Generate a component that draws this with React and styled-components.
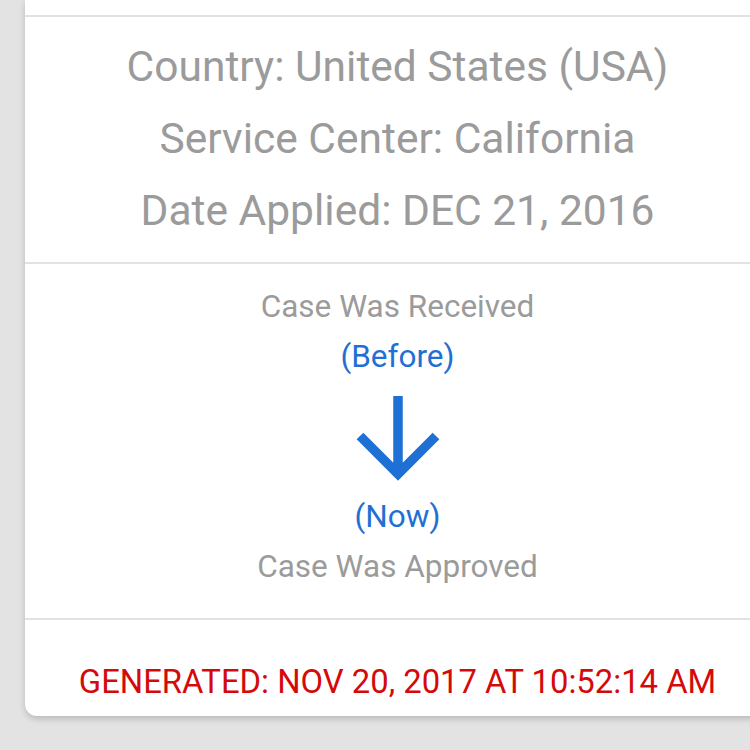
import React from 'react';
import styled, { createGlobalStyle } from 'styled-components';

const GlobalStyle = createGlobalStyle`
  html, body {
    margin: 0;
    padding: 0;
    background: #e3e3e3;
    overflow: hidden;
  }
  body {
    font-family: 'Roboto', 'Liberation Sans', sans-serif;
  }
`;

const Page = styled.div`
  width: 750px;
  height: 750px;
  overflow: hidden;
  padding-left: 25px;
  box-sizing: border-box;
`;

const Card = styled.div`
  width: 745px;
  background: #fff;
  border-bottom-left-radius: 12px;
  box-shadow: 0 3px 6px rgba(0, 0, 0, 0.18);
`;

const Section = styled.div`
  border-top: 2px solid #e2e2e2;
  padding: ${(p) => p.pad || '0'};
  display: flex;
  flex-direction: column;
  align-items: center;
  text-align: center;
`;

const TopStrip = styled.div`
  height: 15px;
`;

const InfoLine = styled.div`
  font-size: 42.5px;
  line-height: 72px;
  color: #9b9b9b;
  white-space: nowrap;
`;

const StatusLine = styled.div`
  font-size: 31.5px;
  line-height: 50px;
  color: ${(p) => (p.blue ? '#1f70d4' : '#9b9b9b')};
  white-space: nowrap;
`;

const ArrowBox = styled.div`
  height: 110px;
  display: flex;
  align-items: center;
  justify-content: center;
`;

const Generated = styled.div`
  font-size: 32.8px;
  line-height: 40px;
  color: #d40a0a;
  white-space: nowrap;
`;

const DownArrow = () => (
  <svg width="90" height="90" viewBox="0 0 90 90">
    <path
      d="M45 4 V82 M7 44 L45 82 L83 44"
      fill="none"
      stroke="#1f70d4"
      strokeWidth="9.5"
    />
  </svg>
);

export default function App() {
  return (
    <Page>
      <GlobalStyle />
      <Card>
        <TopStrip />
        <Section pad="14px 0 15px">
          <InfoLine>Country: United States (USA)</InfoLine>
          <InfoLine>Service Center: California</InfoLine>
          <InfoLine>Date Applied: DEC 21, 2016</InfoLine>
        </Section>
        <Section pad="18px 0 26px">
          <StatusLine>Case Was Received</StatusLine>
          <StatusLine blue>(Before)</StatusLine>
          <ArrowBox>
            <DownArrow />
          </ArrowBox>
          <StatusLine blue>(Now)</StatusLine>
          <StatusLine>Case Was Approved</StatusLine>
        </Section>
        <Section pad="42px 0 14px">
          <Generated>GENERATED: NOV 20, 2017 AT 10:52:14 AM</Generated>
        </Section>
      </Card>
    </Page>
  );
}
